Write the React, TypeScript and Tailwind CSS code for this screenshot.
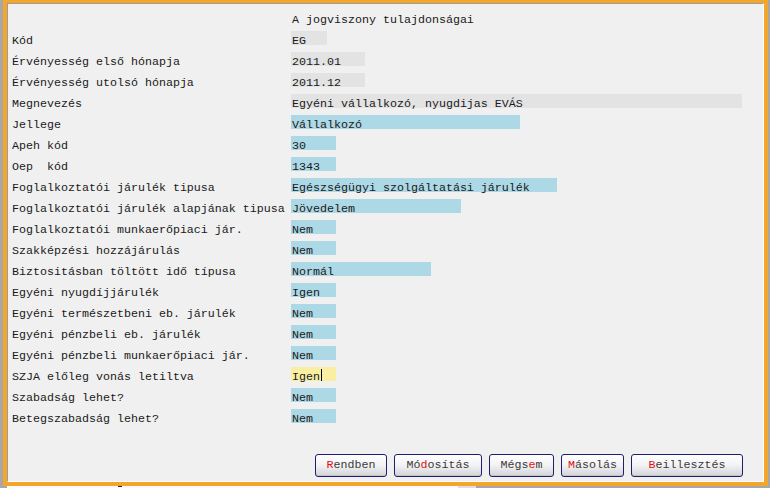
import type { ReactNode } from "react";

type Row = {
  label: string;
  value: string;
  width: number;
  tone: "gray" | "blue" | "yellow";
  cursor?: boolean;
};

const rows: Row[] = [
  { label: "Kód", value: "EG", width: 36, tone: "gray" },
  { label: "Érvényesség első hónapja", value: "2011.01", width: 74, tone: "gray" },
  { label: "Érvényesség utolsó hónapja", value: "2011.12", width: 74, tone: "gray" },
  { label: "Megnevezés", value: "Egyéni vállalkozó, nyugdijas EVÁS", width: 451, tone: "gray" },
  { label: "Jellege", value: "Vállalkozó", width: 229, tone: "blue" },
  { label: "Apeh kód", value: "30", width: 45, tone: "blue" },
  { label: "Oep  kód", value: "1343", width: 45, tone: "blue" },
  { label: "Foglalkoztatói járulék tipusa", value: "Egészségügyi szolgáltatási járulék", width: 266, tone: "blue" },
  { label: "Foglalkoztatói járulék alapjának tipusa", value: "Jövedelem", width: 170, tone: "blue" },
  { label: "Foglalkoztatói munkaerőpiaci jár.", value: "Nem", width: 45, tone: "blue" },
  { label: "Szakképzési hozzájárulás", value: "Nem", width: 45, tone: "blue" },
  { label: "Biztositásban töltött idő típusa", value: "Normál", width: 140, tone: "blue" },
  { label: "Egyéni nyugdíjjárulék", value: "Igen", width: 45, tone: "blue" },
  { label: "Egyéni természetbeni eb. járulék", value: "Nem", width: 45, tone: "blue" },
  { label: "Egyéni pénzbeli eb. járulék", value: "Nem", width: 45, tone: "blue" },
  { label: "Egyéni pénzbeli munkaerőpiaci jár.", value: "Nem", width: 45, tone: "blue" },
  { label: "SZJA előleg vonás letiltva", value: "Igen", width: 45, tone: "yellow", cursor: true },
  { label: "Szabadság lehet?", value: "Nem", width: 45, tone: "blue" },
  { label: "Betegszabadság lehet?", value: "Nem", width: 45, tone: "blue" },
];

const toneClass = {
  gray: "bg-[#e3e3e3]",
  blue: "bg-[#add8e6]",
  yellow: "bg-[#f8efa2]",
};

function Button({ width, children }: { width: number; children: ReactNode }) {
  return (
    <button
      className="flex h-[23px] items-center justify-center rounded-[3px] border border-[#1c1f6e] bg-gradient-to-b from-white via-[#f2f2f4] to-[#d3d3d8] text-[#3a3a3a] shadow-[inset_0_-1px_0_rgba(0,0,0,0.08)]"
      style={{ width }}
    >
      {children}
    </button>
  );
}

const Hot = ({ children }: { children: ReactNode }) => <span className="text-[#e01010]">{children}</span>;

export default function App() {
  return (
    <div className="flex h-[488px] w-[770px] flex-col bg-[#a7a7a7] font-['Liberation_Mono','Courier_New',monospace] text-[11.67px] text-[#1a1a1a]">
      <div className="flex h-[486px]">
        <div className="w-[3px]" />
        {/* orange focus frame */}
        <div className="flex w-[765px] border-x-4 border-t-[3px] border-b-4 border-[#f2a72c]">
          <div className="flex flex-1 flex-col border-t border-l border-[#9c9c9c] border-r-white border-b-white border-r border-b bg-[#f0f0f0] pl-[4px] pt-[3px]">
            <div className="flex h-[21px] pt-[3px] leading-[20px]">
              <div className="w-[279px]" />
              <div className="pl-[1px] whitespace-pre">A jogviszony tulajdonságai</div>
            </div>

            {rows.map((r) => (
              <div key={r.label} className="flex h-[21px] pt-[3px] leading-[20px]">
                <div className="w-[279px] shrink-0 whitespace-pre">{r.label}</div>
                <div className={`flex h-[14px] items-start pl-[1px] whitespace-pre ${toneClass[r.tone]}`} style={{ width: r.width }}>
                  {r.value}
                  {r.cursor ? <span className="mt-[2px] ml-[1px] h-[12px] w-[1px] bg-black" /> : null}
                </div>
              </div>
            ))}

            <div className="mt-[27px] flex justify-end gap-[7px] pr-[20px] text-[11.67px]">
              <Button width={72}>
                <span>
                  <Hot>R</Hot>endben
                </span>
              </Button>
              <Button width={88}>
                <span>
                  Mó<Hot>d</Hot>osítás
                </span>
              </Button>
              <Button width={65}>
                <span>
                  Mégs<Hot>e</Hot>m
                </span>
              </Button>
              <Button width={63}>
                <span>
                  <Hot>M</Hot>ásolás
                </span>
              </Button>
              <Button width={112}>
                <span>
                  <Hot>B</Hot>eillesztés
                </span>
              </Button>
            </div>
          </div>
        </div>
      </div>

      {/* strip of the window underneath */}
      <div className="flex h-[2px]">
        <div className="w-[7px]" />
        <div className="flex w-[451px] bg-[#fbfbfb]">
          <div className="ml-[111px] h-[1px] w-[4px] bg-[#222]" />
        </div>
        <div className="w-[18px] bg-[#dedede]" />
      </div>
    </div>
  );
}
